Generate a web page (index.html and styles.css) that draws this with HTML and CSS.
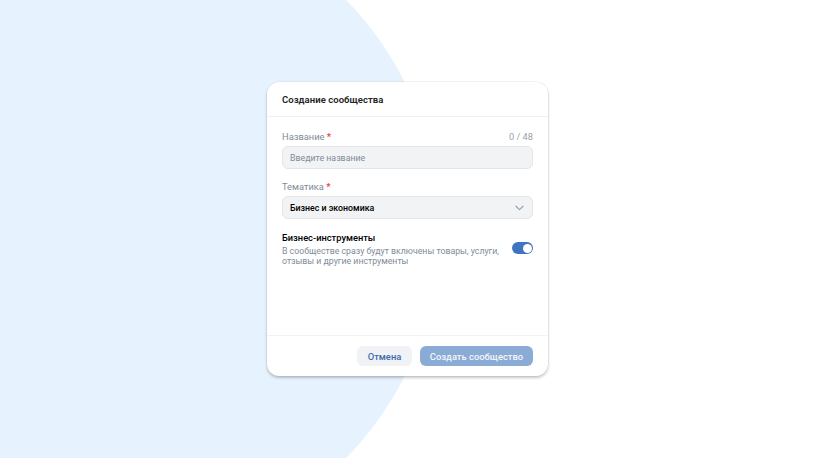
FILE: index.html
```html
<!DOCTYPE html>
<html lang="ru">
<head>
<meta charset="utf-8">
<title>Создание сообщества</title>
<link rel="stylesheet" href="styles.css">
</head>
<body>
<div class="page">
  <div class="card">
    <div class="card-header">
      <div class="card-title">Создание сообщества</div>
    </div>
    <div class="card-body">
      <div class="field">
        <div class="field-top">
          <span class="label">Название <span class="req">*</span></span>
          <span class="counter">0 / 48</span>
        </div>
        <div class="input"><span class="placeholder">Введите название</span></div>
      </div>
      <div class="field">
        <div class="field-top">
          <span class="label">Тематика <span class="req">*</span></span>
        </div>
        <div class="input select">
          <span class="value">Бизнес и экономика</span>
          <svg class="chevron" width="9" height="6" viewBox="0 0 9 6"><path d="M1 1.2l3.5 3.4 3.5-3.4" fill="none" stroke="#99a2ad" stroke-width="1.2" stroke-linecap="round" stroke-linejoin="round"/></svg>
        </div>
      </div>
      <div class="biz">
        <div class="biz-text">
          <div class="biz-title">Бизнес-инструменты</div>
          <div class="biz-desc">В сообществе сразу будут включены товары, услуги, отзывы и другие инструменты</div>
        </div>
        <div class="toggle"><div class="knob"></div></div>
      </div>
    </div>
    <div class="card-footer">
      <button class="btn btn-secondary">Отмена</button>
      <button class="btn btn-primary">Создать сообщество</button>
    </div>
  </div>
</div>
</body>
</html>
```
FILE: styles.css
```css
* { box-sizing: border-box; }
html, body { margin: 0; padding: 0; }
body {
  width: 815px;
  height: 458px;
  overflow: hidden;
  font-family: Roboto, "Noto Sans", "Liberation Sans", sans-serif;
  background: #ffffff radial-gradient(circle 328px at 112px 229px, #e6f3fe 99.7%, #ffffff 100%) no-repeat;
}
.page {
  width: 815px;
  height: 458px;
  display: flex;
  align-items: center;
  justify-content: center;
}
.card {
  width: 281px;
  height: 294px;
  background: #fff;
  border-radius: 12px;
  box-shadow: 0 0 0 0.5px rgba(0,0,0,0.08), 0 2px 3px rgba(0,0,0,0.22);
  display: flex;
  flex-direction: column;
}
.card-header {
  height: 35px;
  padding: 0 15px;
  display: flex;
  align-items: center;
  border-bottom: 1px solid #eef0f2;
}
.card-title {
  font-size: 9.5px;
  font-weight: 600;
  color: #222;
  letter-spacing: 0.05px;
}
.card-body {
  flex: 1;
  padding: 12px 15px 0;
  display: flex;
  flex-direction: column;
}
.field { margin-bottom: 10px; }
.field-top {
  height: 14px;
  display: flex;
  justify-content: space-between;
  align-items: center;
  margin-bottom: 3px;
}
.label {
  font-size: 9.3px;
  color: #7f8a97;
}
.req { color: #e64646; font-weight: 700; }
.counter {
  font-size: 9.3px;
  color: #99a2ad;
}
.input {
  height: 23px;
  background: #f2f3f5;
  border: 0.5px solid #e3e5e8;
  border-radius: 6px;
  padding: 0 8px 0 7px;
  display: flex;
  align-items: center;
  justify-content: space-between;
}
.placeholder {
  font-size: 8.8px;
  color: #818c99;
}
.value {
  font-size: 8.8px;
  font-weight: 500;
  color: #000;
}
.chevron { display: block; }
.biz {
  display: flex;
  align-items: center;
  justify-content: space-between;
  margin-top: 2px;
}
.biz-text { width: 222px; }
.biz-title {
  font-size: 9.3px;
  font-weight: 500;
  color: #000;
  line-height: 13px;
  margin-bottom: 2px;
}
.biz-desc {
  font-size: 8.75px;
  color: #818c99;
  line-height: 10px;
}
.toggle {
  width: 21px;
  height: 12px;
  border-radius: 6px;
  background: #3f74c1;
  display: flex;
  align-items: center;
  justify-content: flex-end;
  padding: 0 1.5px;
  margin-top: -1px;
}
.knob {
  width: 9px;
  height: 9px;
  border-radius: 50%;
  background: #fff;
}
.card-footer {
  height: 41px;
  border-top: 1px solid #f2f3f5;
  padding: 0 15px;
  display: flex;
  align-items: center;
  justify-content: flex-end;
  gap: 8px;
}
.btn {
  height: 20px;
  border: none;
  border-radius: 6px;
  font-family: inherit;
  font-size: 9.4px;
  font-weight: 500;
  padding: 0;
  display: flex;
  align-items: center;
  justify-content: center;
}
.btn-secondary {
  width: 55px;
  background: #f0f2f5;
  color: #3a6aa9;
}
.btn-primary {
  width: 113px;
  background: #8aabd6;
  color: #f4f7fb;
}
```
